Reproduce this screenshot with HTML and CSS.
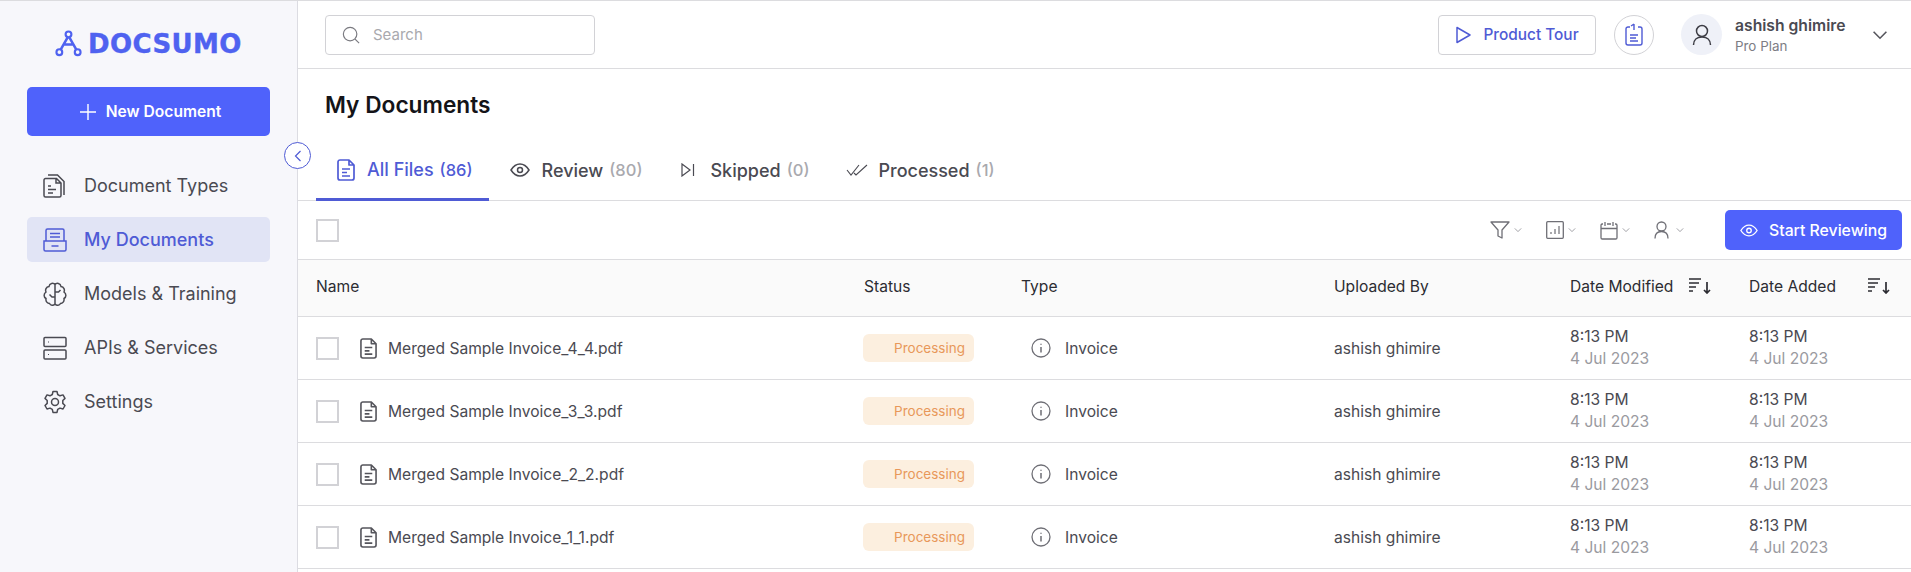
FILE: index.html
```html
<!DOCTYPE html>
<html lang="en">
<head>
    <meta charset="UTF-8">
    <title>My Documents - Docsumo</title>
    <link rel="stylesheet" href="styles.css">
</head>
<body>
    <svg class="sprite" xmlns="http://www.w3.org/2000/svg">
        <symbol id="i-file" viewBox="0 0 18 22"><path d="M1 3a2 2 0 0 1 2-2h9l5 5v13a2 2 0 0 1-2 2H3a2 2 0 0 1-2-2z M12 1v5h5 M5 10h8 M5 13.500h5 M5 17h8" fill="none" stroke="currentColor" stroke-width="1.700" stroke-linejoin="round"/></symbol>
        <symbol id="i-info" viewBox="0 0 20 20"><circle cx="10" cy="10" r="9" fill="none" stroke="currentColor" stroke-width="1.300"/><path d="M10 9v5.500 M10 5.800v1" stroke="currentColor" stroke-width="1.500" fill="none"/></symbol>
        <symbol id="i-sort" viewBox="0 0 22 16"><path d="M0 1h12 M0 5h10 M0 9h7 M0 13h4 M18 4v11 M15 12l3 3 3-3" fill="none" stroke="currentColor" stroke-width="1.700"/></symbol>
        <symbol id="i-chev" viewBox="0 0 10 6"><path d="M1 1l4 4 4-4" fill="none" stroke="currentColor" stroke-width="1"/></symbol>
        <symbol id="i-eye" viewBox="0 0 20 14"><path d="M1 7c2.500-4 5.500-6 9-6s6.500 2 9 6c-2.500 4-5.500 6-9 6s-6.500-2-9-6z" fill="none" stroke="currentColor" stroke-width="1.500"/><circle cx="10" cy="7" r="2.500" fill="none" stroke="currentColor" stroke-width="1.500"/></symbol>
    </svg>

    <div class="app">
        <aside class="sidebar">
            <div class="logo">
                <svg class="logo-mark" viewBox="0 0 28 28"><path d="M14 6L5 22M14 6l9 16M9 15h10" fill="none" stroke="#4f62f0" stroke-width="2.600"/><circle cx="14" cy="4.500" r="3" fill="#f7f7fb" stroke="#4f62f0" stroke-width="2.200"/><circle cx="4.500" cy="23" r="3" fill="#f7f7fb" stroke="#4f62f0" stroke-width="2.200"/><circle cx="23.500" cy="23" r="3" fill="#f7f7fb" stroke="#4f62f0" stroke-width="2.200"/></svg>
                <span class="logo-text">DOCSUMO</span>
            </div>
            <button class="new-doc">
                <svg width="16" height="16" viewBox="0 0 16 16"><path d="M8 0v16M0 8h16" stroke="#fff" stroke-width="1.400"/></svg>
                New Document
            </button>
            <nav class="nav">
                <a class="nav-item">
                    <svg class="nav-icon" viewBox="0 0 24 24"><path d="M1 6a1.500 1.500 0 0 1 1.500-1.500h11L18 9v12.500a1.500 1.500 0 0 1-1.500 1.500h-14A1.500 1.500 0 0 1 1 21.500z M5 1h9.500l6.500 6.500V21 M13 4.500V9h5 M5 12h3 M5 15.500h8 M5 19h5" fill="none" stroke="currentColor" stroke-width="1.500"/></svg>
                    Document Types
                </a>
                <a class="nav-item active">
                    <svg class="nav-icon" viewBox="0 0 24 24"><path d="M3 13V2.500A1.500 1.500 0 0 1 4.500 1h15A1.500 1.500 0 0 1 21 2.500V13 M1 13h22v8.500a1.500 1.500 0 0 1-1.500 1.500h-19A1.500 1.500 0 0 1 1 21.500z M7 5.500h10 M7 9h10 M8.500 18h7" fill="none" stroke="currentColor" stroke-width="1.500"/></svg>
                    My Documents
                </a>
                <a class="nav-item">
                    <svg class="nav-icon" viewBox="0 0 24 24"><path d="M12 2.500C10.500 .5 6.500 1 6 4.500 3 5 2 8 3 10c-2.500 2-2.500 5 0 6.500-.5 3 1.500 5 3.500 5 1 2 4 2.500 5.500 .5 1.500 2 4.500 1.500 5.500-.5 2 0 4-2 3.500-5 2.500-1.500 2.500-4.500 0-6.500 1-2 0-5-3-5.500-.5-3.500-4.500-4-6-2z M12 2.500V22 M12 10h3.500l2-2 M12 15h-3l-2.500-2.500" fill="none" stroke="currentColor" stroke-width="1.500"/></svg>
                    Models &amp; Training
                </a>
                <a class="nav-item">
                    <svg class="nav-icon" viewBox="0 0 24 24"><rect x="1" y="1.500" width="22" height="9" rx="1" fill="none" stroke="currentColor" stroke-width="1.500"/><rect x="1" y="14" width="22" height="9" rx="1" fill="none" stroke="currentColor" stroke-width="1.500"/><path d="M5 6h1 M5 18.500h1" stroke="currentColor" stroke-width="1.200"/></svg>
                    APIs &amp; Services
                </a>
                <a class="nav-item">
                    <svg class="nav-icon" viewBox="0 0 24 24"><path d="M10 1.500h4l.7 3 2.300 1.300 3-.9 2 3.500-2.200 2.100v2.900l2.200 2.100-2 3.500-3-.9-2.300 1.300-.7 3h-4l-.7-3L7 18.100l-3 .9-2-3.500 2.200-2.100v-2.900L2 8.400l2-3.500 3 .9 2.300-1.300z" fill="none" stroke="currentColor" stroke-width="1.500" stroke-linejoin="round"/><circle cx="12" cy="12" r="3.500" fill="none" stroke="currentColor" stroke-width="1.500"/></svg>
                    Settings
                </a>
            </nav>
            <button class="collapse">
                <svg width="8" height="12" viewBox="0 0 8 12"><path d="M6.500 1L1.500 6l5 5" fill="none" stroke="#4f5bd5" stroke-width="1.200"/></svg>
            </button>
        </aside>

        <main class="main">
            <header class="topbar">
                <div class="search">
                    <svg width="18" height="18" viewBox="0 0 20 20"><circle cx="9" cy="9" r="7.500" fill="none" stroke="#7a7a80" stroke-width="1.300"/><path d="M14.500 14.500L19 19" stroke="#7a7a80" stroke-width="1.300"/></svg>
                    <span>Search</span>
                </div>
                <button class="tour">
                    <svg width="16" height="18" viewBox="0 0 16 18"><path d="M2 1.500l13 7.500-13 7.500z" fill="none" stroke="#4f5bd5" stroke-width="1.500" stroke-linejoin="round"/></svg>
                    Product Tour
                </button>
                <div class="notes">
                    <svg width="18" height="23" viewBox="0 0 18 23"><path d="M5 4H3a2 2 0 0 0-2 2v14a2 2 0 0 0 2 2h12a2 2 0 0 0 2-2V6a2 2 0 0 0-2-2h-2 M9 1v6 M6 3l3-2 M5 12h8 M5 15h6 M5 18h8" fill="none" stroke="#4f5bd5" stroke-width="1.400"/></svg>
                </div>
                <div class="avatar">
                    <svg width="20" height="22" viewBox="0 0 20 22"><circle cx="10" cy="7" r="5.500" fill="none" stroke="#3d3d45" stroke-width="1.500"/><path d="M1.500 21c0-5 3.500-8 8.500-8s8.500 3 8.500 8" fill="none" stroke="#3d3d45" stroke-width="1.500"/></svg>
                </div>
                <div class="user">
                    <div class="user-name">ashish ghimire</div>
                    <div class="user-plan">Pro Plan</div>
                </div>
                <svg class="user-chev" width="16" height="10"><use href="#i-chev"/></svg>
            </header>

            <h1 class="title">My Documents</h1>

            <div class="tabs">
                <a class="tab active">
                    <svg width="18" height="22"><use href="#i-file"/></svg>
                    All Files <span class="count">(86)</span>
                </a>
                <a class="tab">
                    <svg width="20" height="14"><use href="#i-eye"/></svg>
                    Review <span class="count">(80)</span>
                </a>
                <a class="tab skipped">
                    <svg width="14" height="14" viewBox="0 0 14 14"><path d="M1 1l8 6-8 6z M12.500 1v12" fill="none" stroke="currentColor" stroke-width="1.200"/></svg>
                    Skipped <span class="count">(0)</span>
                </a>
                <a class="tab processed">
                    <svg width="22" height="12" viewBox="0 0 22 12"><path d="M1 6l4 5 8-10 M8 9l2 2L21 1" fill="none" stroke="currentColor" stroke-width="1.100"/></svg>
                    Processed <span class="count">(1)</span>
                </a>
            </div>

            <div class="toolbar">
                <span class="check"></span>
                <div class="filters">
                    <div class="filter">
                        <svg width="20" height="20" viewBox="0 0 20 20"><path d="M1 2h18l-7 8v8l-4-2v-6z" fill="none" stroke="#6f6f76" stroke-width="1.300" stroke-linejoin="round"/></svg>
                        <svg width="8" height="6"><use href="#i-chev"/></svg>
                    </div>
                    <div class="filter">
                        <svg width="18" height="18" viewBox="0 0 18 18"><rect x=".7" y=".7" width="16.600" height="16.600" rx="1" fill="none" stroke="#6f6f76" stroke-width="1.300"/><path d="M5 13v-2 M9 13V8 M13 13V5" stroke="#6f6f76" stroke-width="1.200"/></svg>
                        <svg width="8" height="6"><use href="#i-chev"/></svg>
                    </div>
                    <div class="filter">
                        <svg width="18" height="19" viewBox="0 0 18 19"><path d="M3 3H2a1.300 1.300 0 0 0-1 1.300v12.400A1.300 1.300 0 0 0 2.300 18h13.400a1.300 1.300 0 0 0 1.300-1.300V4.300A1.300 1.300 0 0 0 15.700 3H15 M1 7.500h16 M5 1v4 M13 1v4 M7 3h4" fill="none" stroke="#6f6f76" stroke-width="1.300"/></svg>
                        <svg width="8" height="6"><use href="#i-chev"/></svg>
                    </div>
                    <div class="filter user-filter">
                        <svg width="15" height="18" viewBox="0 0 15 18"><circle cx="7.500" cy="5.500" r="4.500" fill="none" stroke="#6f6f76" stroke-width="1.300"/><path d="M1 17.500c0-4.500 2.500-7 6.500-7s6.500 2.500 6.500 7" fill="none" stroke="#6f6f76" stroke-width="1.300"/></svg>
                        <svg width="8" height="6"><use href="#i-chev"/></svg>
                    </div>
                </div>
                <button class="start">
                    <svg width="18" height="13"><use href="#i-eye"/></svg>
                    Start Reviewing
                </button>
            </div>

            <div class="row head">
                <div class="cell">Name</div>
                <div class="cell">Status</div>
                <div class="cell">Type</div>
                <div class="cell">Uploaded By</div>
                <div class="cell sortable">Date Modified <svg width="22" height="16"><use href="#i-sort"/></svg></div>
                <div class="cell sortable">Date Added <svg width="22" height="16"><use href="#i-sort"/></svg></div>
            </div>

            <div class="row">
                <div class="cell name"><span class="check"></span><svg class="doc" width="17" height="21"><use href="#i-file"/></svg>Merged Sample Invoice_4_4.pdf</div>
                <div class="cell"><span class="pill">Processing</span></div>
                <div class="cell type"><svg width="20" height="20"><use href="#i-info"/></svg>Invoice</div>
                <div class="cell">ashish ghimire</div>
                <div class="cell date">8:13 PM<small>4 Jul 2023</small></div>
                <div class="cell date">8:13 PM<small>4 Jul 2023</small></div>
            </div>
            <div class="row">
                <div class="cell name"><span class="check"></span><svg class="doc" width="17" height="21"><use href="#i-file"/></svg>Merged Sample Invoice_3_3.pdf</div>
                <div class="cell"><span class="pill">Processing</span></div>
                <div class="cell type"><svg width="20" height="20"><use href="#i-info"/></svg>Invoice</div>
                <div class="cell">ashish ghimire</div>
                <div class="cell date">8:13 PM<small>4 Jul 2023</small></div>
                <div class="cell date">8:13 PM<small>4 Jul 2023</small></div>
            </div>
            <div class="row">
                <div class="cell name"><span class="check"></span><svg class="doc" width="17" height="21"><use href="#i-file"/></svg>Merged Sample Invoice_2_2.pdf</div>
                <div class="cell"><span class="pill">Processing</span></div>
                <div class="cell type"><svg width="20" height="20"><use href="#i-info"/></svg>Invoice</div>
                <div class="cell">ashish ghimire</div>
                <div class="cell date">8:13 PM<small>4 Jul 2023</small></div>
                <div class="cell date">8:13 PM<small>4 Jul 2023</small></div>
            </div>
            <div class="row">
                <div class="cell name"><span class="check"></span><svg class="doc" width="17" height="21"><use href="#i-file"/></svg>Merged Sample Invoice_1_1.pdf</div>
                <div class="cell"><span class="pill">Processing</span></div>
                <div class="cell type"><svg width="20" height="20"><use href="#i-info"/></svg>Invoice</div>
                <div class="cell">ashish ghimire</div>
                <div class="cell date">8:13 PM<small>4 Jul 2023</small></div>
                <div class="cell date">8:13 PM<small>4 Jul 2023</small></div>
            </div>
        </main>
    </div>
</body>
</html>
```

FILE: styles.css
```css
html, body {
    height: 100%;
    margin: 0;
    overflow: hidden;
}
body {
    font-family: Inter, "Noto Sans", sans-serif;
    font-size: 15.6px;
    color: #4a4a52;
    background-color: #fff;
}
button {
    font-family: inherit;
    border: none;
    cursor: pointer;
}
.sprite {
    display: none;
}
.app {
    display: flex;
    height: 100%;
    border-top: 1px solid #dcdcdf;
    box-sizing: border-box;
}

/* sidebar */
.sidebar {
    position: relative;
    box-sizing: border-box;
    flex: 0 0 298px;
    padding: 0 27px;
    background-color: #f7f7fb;
    border-right: 1px solid #dcdce2;
}
.logo {
    display: flex;
    align-items: center;
    gap: 6px;
    height: 27px;
    margin: 29px 0 0 28px;
}
.logo-mark {
    width: 27px;
    height: 27px;
}
.logo-text {
    font-family: "DejaVu Sans", sans-serif;
    font-size: 26px;
    font-weight: 700;
    letter-spacing: .4px;
    -webkit-text-stroke: .4px #4f62f0;
    color: #4f62f0;
}
.new-doc {
    display: flex;
    align-items: center;
    justify-content: center;
    gap: 10px;
    width: 243px;
    height: 49px;
    margin-top: 30px;
    padding-left: 10px;
    background-color: #4f62fb;
    color: #fff;
    font-size: 15.6px;
    font-weight: 600;
    border-radius: 5px;
}
.nav {
    display: flex;
    flex-direction: column;
    gap: 9px;
    margin-top: 27px;
}
.nav-item {
    display: flex;
    align-items: center;
    gap: 17px;
    height: 45px;
    padding-left: 16px;
    font-size: 18px;
    color: #4a4a52;
    border-radius: 5px;
}
.nav-item.active {
    background-color: #e1e4f5;
    color: #4f5bd5;
    font-weight: 500;
}
.nav-icon {
    width: 24px;
    height: 24px;
}
.collapse {
    position: absolute;
    top: 141px;
    right: -14px;
    display: flex;
    align-items: center;
    justify-content: center;
    width: 27px;
    height: 27px;
    padding: 0;
    background-color: #fff;
    border: 1px solid #4f5bd5;
    border-radius: 50%;
}

/* main */
.main {
    flex: 1;
    min-width: 0;
}
.topbar {
    display: flex;
    align-items: center;
    height: 67px;
    padding: 0 23px 0 27px;
    border-bottom: 1px solid #dcdcdf;
}
.search {
    display: flex;
    align-items: center;
    gap: 13px;
    box-sizing: border-box;
    width: 270px;
    height: 40px;
    padding-left: 16px;
    border: 1px solid #d2d2d6;
    border-radius: 4px;
    color: #a9a9ae;
    font-size: 15px;
}
.tour {
    display: flex;
    align-items: center;
    justify-content: center;
    gap: 12px;
    box-sizing: border-box;
    width: 158px;
    height: 40px;
    margin-left: auto;
    background-color: #fff;
    border: 1px solid #d2d2d6;
    border-radius: 4px;
    color: #4f5bd5;
    font-size: 15.4px;
    font-weight: 500;
}
.notes {
    display: flex;
    align-items: center;
    justify-content: center;
    box-sizing: border-box;
    width: 40px;
    height: 40px;
    margin-left: 18px;
    border: 1px solid #d2d2d6;
    border-radius: 50%;
}
.avatar {
    display: flex;
    align-items: center;
    justify-content: center;
    width: 41px;
    height: 41px;
    margin-left: 27px;
    background-color: #eff1f8;
    border-radius: 50%;
}
.user {
    width: 137px;
    margin: 2px 0 0 13px;
}
.user-name {
    font-size: 15.7px;
    font-weight: 600;
    color: #4a4a52;
    line-height: 20px;
}
.user-plan {
    margin-top: 1px;
    font-size: 13.4px;
    color: #7d7d84;
    line-height: 18px;
}
.user-chev {
    color: #55555c;
}
.title {
    margin: 0;
    padding: 21px 0 0 27px;
    font-size: 22.7px;
    line-height: 30px;
    font-weight: 600;
    color: #141418;
}

/* tabs */
.tabs {
    display: flex;
    height: 61px;
    margin-top: 19px;
    padding-left: 18px;
    border-bottom: 1px solid #dcdcdf;
}
.tab {
    display: flex;
    align-items: center;
    gap: 6px;
    box-sizing: border-box;
    height: 62px;
    padding: 0 18px 0 21px;
    font-size: 18px;
    font-weight: 500;
    color: #4a4a52;
}
.tab svg {
    margin-right: 6px;
}
.tab.active {
    padding-top: 2px;
    padding-right: 16px;
    color: #4f5bd5;
    border-bottom: 3px solid #4f5bd5;
}
.skipped svg {
    margin-right: 9px;
}
.processed {
    padding-left: 19px;
}
.processed svg {
    margin-right: 4px;
}
.count {
    font-size: 16.5px;
    color: #a9a9ae;
}
.tab.active .count {
    color: #4f5bd5;
}

/* toolbar above the table */
.toolbar {
    display: flex;
    align-items: center;
    height: 58px;
    padding: 0 9px 0 18px;
    border-bottom: 1px solid #dcdcdf;
}
.check {
    display: block;
    flex: none;
    box-sizing: border-box;
    width: 23px;
    height: 23px;
    background-color: #fff;
    border: 2px solid #d2d2d6;
}
.filters {
    display: flex;
    gap: 24px;
    margin-left: auto;
    margin-right: 41px;
}
.filter {
    display: flex;
    align-items: center;
    gap: 4px;
    color: #8a8a90;
}
.user-filter {
    gap: 7px;
}
.start {
    display: flex;
    align-items: center;
    justify-content: center;
    gap: 11px;
    width: 177px;
    height: 40px;
    background-color: #4f62fb;
    color: #fff;
    font-size: 15.8px;
    font-weight: 500;
    border-radius: 5px;
}

/* table */
.row {
    display: grid;
    grid-template-columns: 548px 157px 313px 236px 179px 1fr;
    align-items: center;
    box-sizing: border-box;
    height: 63px;
    padding-left: 18px;
    border-bottom: 1px solid #dcdcdf;
}
.row.head {
    height: 57px;
    padding-bottom: 4px;
    background-color: #fafafa;
    color: #2c2c32;
}
.cell {
    display: flex;
    align-items: center;
}
.sortable svg {
    margin-left: 16px;
    color: #2c2c32;
}
.sortable + .sortable svg {
    margin-left: 32px;
}
.name .doc {
    margin: 0 11px 0 21px;
    color: #55555c;
}
.pill {
    box-sizing: border-box;
    width: 111px;
    height: 28px;
    margin-left: -1px;
    padding-right: 9px;
    background-color: #fcefdf;
    border-radius: 6px;
    color: #e8985a;
    font-size: 13.5px;
    line-height: 28px;
    text-align: right;
}
.type svg {
    margin: 0 14px 0 10px;
    color: #6f6f76;
}
.date {
    flex-direction: column;
    align-items: flex-start;
    line-height: 22px;
}
.date small {
    font-size: 15.6px;
    color: #9a9a9f;
}
```
